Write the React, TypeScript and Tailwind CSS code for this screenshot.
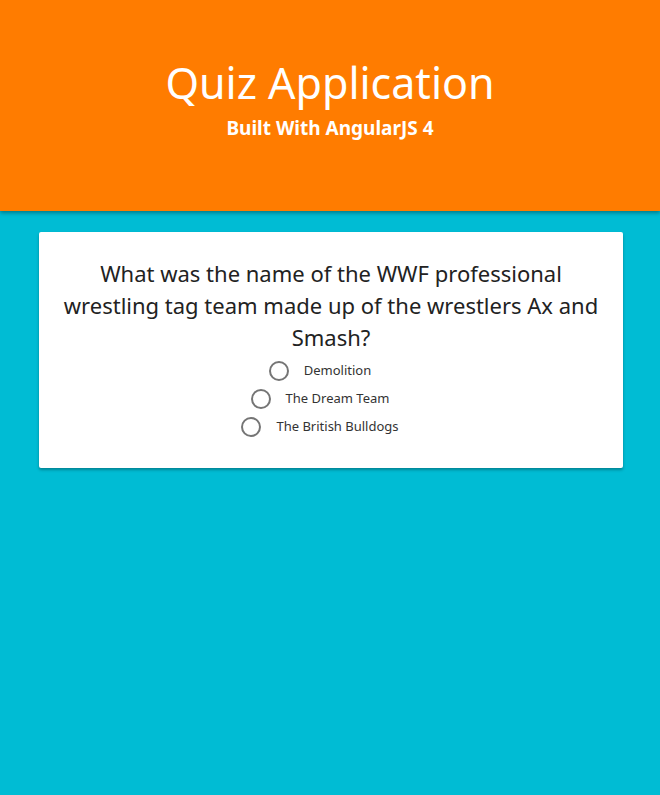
import { useState } from "react"

const options = ["Demolition", "The Dream Team", "The British Bulldogs"]

export default function App() {
  const [picked, setPicked] = useState<string | null>(null)

  return (
    <div className="min-h-[795px] bg-[#00bcd4] font-['Noto_Sans',sans-serif]">
      {/* Header */}
      <header className="h-[211px] bg-[#ff7c00] text-white text-center pt-[55px] shadow-[0_2px_4px_rgba(0,0,0,0.35)] relative">
        <h1 className="text-[43px] leading-[56px] font-normal">Quiz Application</h1>
        <h2 className="text-[19px] leading-[24px] font-bold mt-[5px]">Built With AngularJS 4</h2>
      </header>

      {/* Card */}
      <div className="pt-[21px]">
        <div className="ml-[39px] w-[584px] bg-white rounded-[2px] shadow-[0_2px_3px_rgba(0,0,0,0.3)] pt-[25px] pb-[27px] px-4 text-center">
          <p className="text-[22px] leading-[32px] text-[#222]">
            What was the name of the WWF professional wrestling tag team made up of the wrestlers Ax and Smash?
          </p>
          <div className="flex flex-col items-center mt-[4px] pr-[22px]">
            {options.map((o) => (
              <label key={o} className="flex items-center h-[28px] cursor-pointer">
                <span
                  onClick={() => setPicked(o)}
                  className="w-[20px] h-[20px] rounded-full border-2 border-[#757575] flex items-center justify-center"
                >
                  {picked === o && <span className="w-[10px] h-[10px] rounded-full bg-[#757575]" />}
                </span>
                <span className="ml-[15px] text-[13px] text-[#333]" onClick={() => setPicked(o)}>{o}</span>
              </label>
            ))}
          </div>
        </div>
      </div>
    </div>
  )
}
